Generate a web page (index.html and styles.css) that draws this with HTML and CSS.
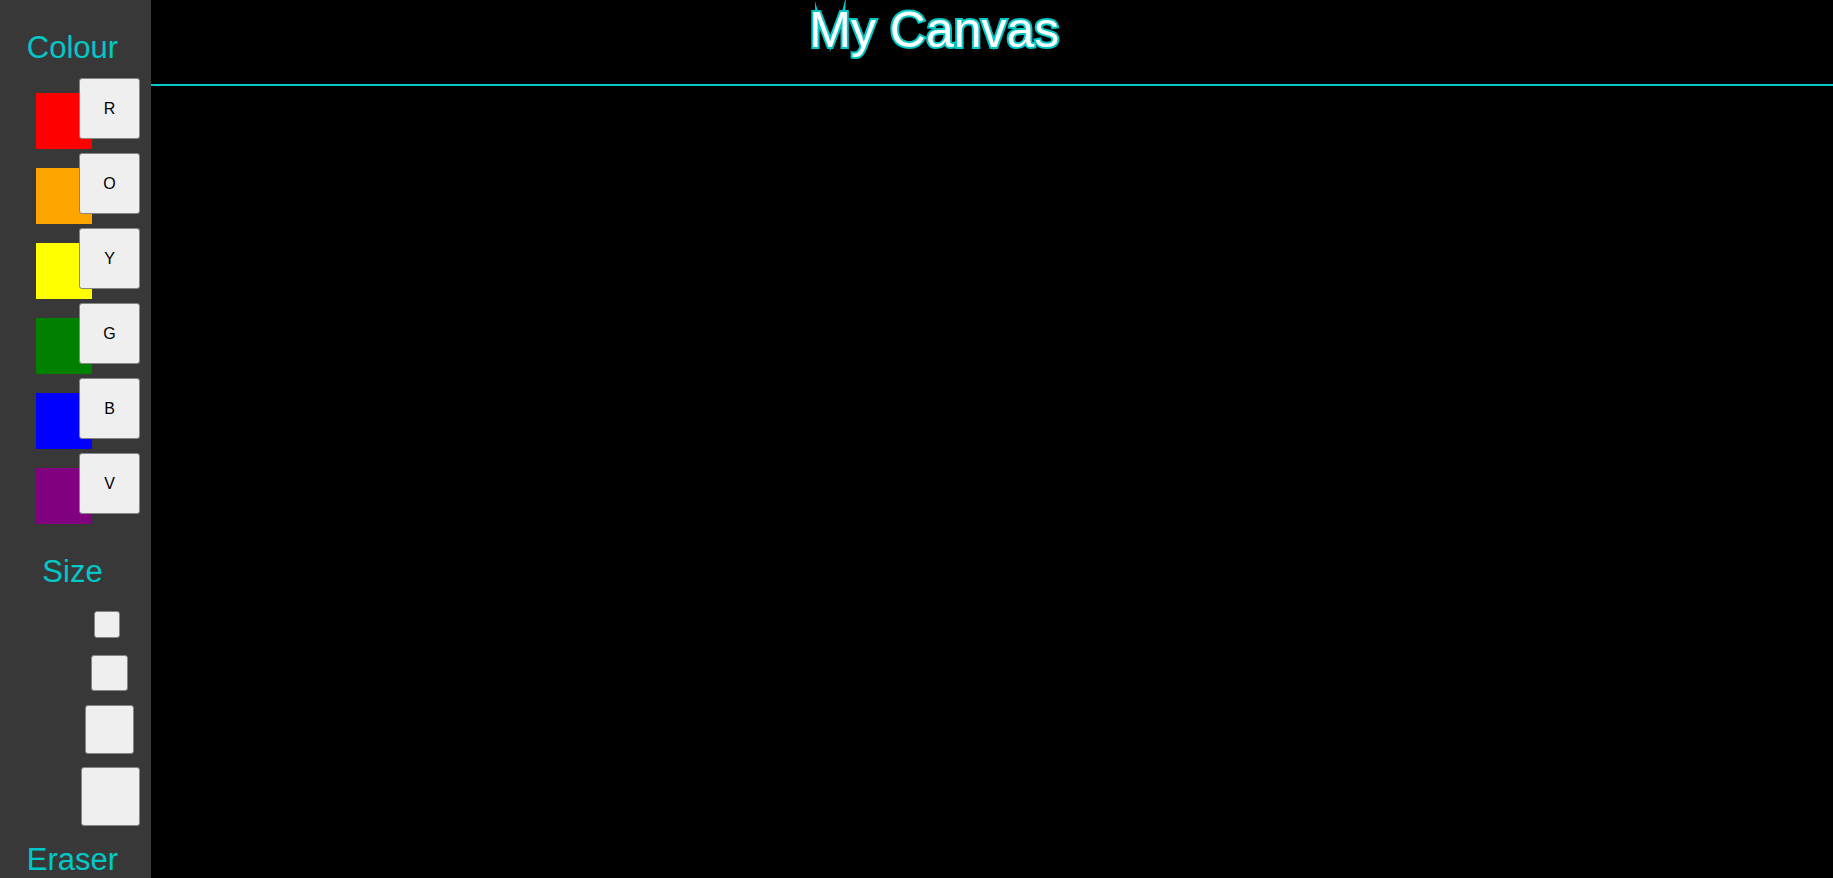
FILE: index.html
```html
<!DOCTYPE html>
<html lang="en">
<head>
<meta charset="utf-8">
<title>My Canvas</title>
<link rel="stylesheet" href="styles.css">
</head>
<body>
<aside class="sidebar">
  <div class="label label-colour">Colour</div>
  <div class="colours">
    <div class="colour-row"><div class="swatch swatch-red"></div><button class="btn colour-btn">R</button></div>
    <div class="colour-row"><div class="swatch swatch-orange"></div><button class="btn colour-btn">O</button></div>
    <div class="colour-row"><div class="swatch swatch-yellow"></div><button class="btn colour-btn">Y</button></div>
    <div class="colour-row"><div class="swatch swatch-green"></div><button class="btn colour-btn">G</button></div>
    <div class="colour-row"><div class="swatch swatch-blue"></div><button class="btn colour-btn">B</button></div>
    <div class="colour-row"><div class="swatch swatch-purple"></div><button class="btn colour-btn">V</button></div>
  </div>
  <div class="label label-size">Size</div>
  <div class="sizes">
    <button class="btn size-btn size-1"></button>
    <button class="btn size-btn size-2"></button>
    <button class="btn size-btn size-3"></button>
    <button class="btn size-btn size-4"></button>
  </div>
  <div class="label label-eraser">Eraser</div>
</aside>
<main class="main">
  <header class="header">
    <svg class="title-svg" width="1682" height="84" viewBox="0 0 1682 84">
      <text class="title" x="658.3" y="46.5">My Canvas</text>
    </svg>
  </header>
  <div class="canvas"></div>
</main>
</body>
</html>
```

FILE: styles.css
```css
html, body {
  margin: 0;
  padding: 0;
  height: 100%;
}

body {
  display: flex;
  background: #000;
  overflow: hidden;
  font-family: "Liberation Sans", Arial, sans-serif;
}

.sidebar {
  width: 151px;
  flex: 0 0 151px;
  background: #383838;
  display: flex;
  flex-direction: column;
  box-sizing: border-box;
  padding-right: 6px;
}

.label {
  color: #00c8c8;
  font-size: 31px;
  line-height: 34px;
  height: 34px;
  text-align: center;
  white-space: nowrap;
}

.label-colour {
  margin-top: 31px;
}

.colours {
  margin-top: 13px;
  display: flex;
  flex-direction: column;
}

.colour-row {
  display: flex;
  align-items: flex-start;
  height: 75px;
  padding-left: 36px;
}

.swatch {
  width: 56px;
  height: 56px;
  margin-top: 15px;
  flex: 0 0 56px;
}

.swatch-red { background: #ff0000; }
.swatch-orange { background: #ffa500; }
.swatch-yellow { background: #ffff00; }
.swatch-green { background: #008000; }
.swatch-blue { background: #0000ff; }
.swatch-purple { background: #800080; }

.btn {
  box-sizing: border-box;
  background: #efefef;
  border: 1px solid #858585;
  border-radius: 3px;
  padding: 0;
  margin: 0;
  font-family: "Liberation Sans", Arial, sans-serif;
  color: #000;
}

.colour-btn {
  width: 61px;
  height: 61px;
  margin-left: -13px;
  font-size: 16px;
  flex: 0 0 61px;
}

.label-size {
  margin-top: 27px;
}

.sizes {
  margin-top: 22px;
  display: flex;
  flex-direction: column;
  align-items: flex-start;
  padding-left: 81px;
}

.size-1 { width: 26px; height: 27px; margin-left: 13px; }
.size-2 { width: 37px; height: 36px; margin-left: 10px; margin-top: 17px; }
.size-3 { width: 49px; height: 49px; margin-left: 4px; margin-top: 14px; }
.size-4 { width: 59px; height: 59px; margin-left: 0; margin-top: 13px; }

.label-eraser {
  margin-top: 17px;
}

.main {
  flex: 1;
  display: flex;
  flex-direction: column;
  min-width: 0;
}

.header {
  flex: 0 0 auto;
  height: 86px;
  box-sizing: border-box;
  border-bottom: 2px solid #00c8c8;
  overflow: hidden;
}

.title-svg {
  display: block;
}

.title {
  font-family: "Liberation Sans", Arial, sans-serif;
  font-size: 50px;
  fill: #ffffff;
  stroke: #00c8c8;
  stroke-width: 4px;
  stroke-linejoin: miter;
  stroke-miterlimit: 10;
  paint-order: stroke fill;
}

.canvas {
  flex: 1;
  background: #000;
}
```
